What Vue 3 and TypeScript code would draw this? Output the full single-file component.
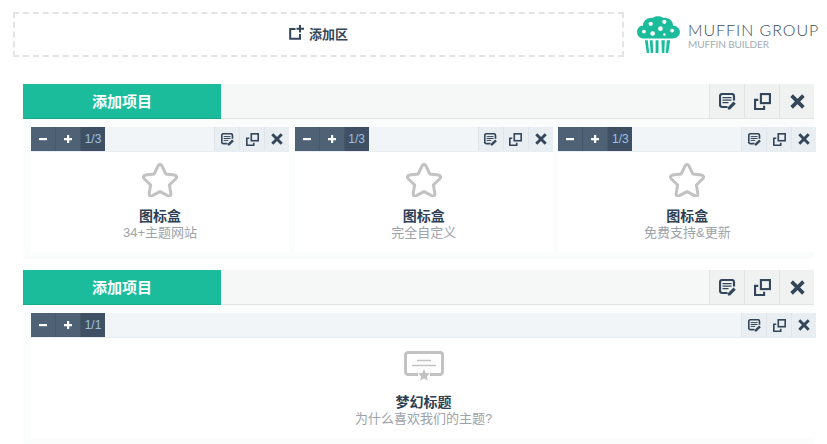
<script setup lang="ts">
interface Card { title: string; sub: string; size: string; icon: string; wide?: boolean }
const row1: Card[] = [
  { title: '图标盒', sub: '34+主题网站', size: '1/3', icon: 'star' },
  { title: '图标盒', sub: '完全自定义', size: '1/3', icon: 'star' },
  { title: '图标盒', sub: '免费支持&更新', size: '1/3', icon: 'star' },
]
const row2: Card[] = [
  { title: '梦幻标题', sub: '为什么喜欢我们的主题?', size: '1/1', icon: 'cert', wide: true },
]
const sections = [row1, row2]
const actions = ['ic-edit', 'ic-dup', 'ic-x']
</script>

<template>
  <div class="page">
    <svg class="defs" aria-hidden="true">
      <symbol id="ic-edit" viewBox="0 0 17 17">
        <path d="M8.500 14H3.200A2.200 2.200 0 0 1 1 11.800V3.200A2.200 2.200 0 0 1 3.200 1h9.600A2.200 2.200 0 0 1 15 3.200v4.300" fill="none" stroke="currentColor" stroke-width="2.200" stroke-linejoin="round" />
        <path d="M3.500 4.700h9M3.500 7.200h9M3.500 9.700h6" stroke="currentColor" stroke-width="1.300" />
        <path d="M8.800 14.200l5.700-5.700 2.300 2.300-5.700 5.700H8.800z" fill="currentColor" />
      </symbol>
      <symbol id="ic-dup" viewBox="0 0 16 16">
        <rect x="6.500" y="1" width="8.500" height="8.500" fill="none" stroke="currentColor" stroke-width="2" />
        <path d="M4 6.500H1V15h8.500v-3" fill="none" stroke="currentColor" stroke-width="2" />
      </symbol>
      <symbol id="ic-x" viewBox="0 0 14 14">
        <path d="M1.500 1.500l11 11M12.500 1.500l-11 11" fill="none" stroke="currentColor" stroke-width="3.400" />
      </symbol>
    </svg>

    <div class="top">
      <div class="add-zone">
        <svg class="add-icon" viewBox="0 0 15 15">
          <path d="M6.500 4H1.200v9.800H11V9" fill="none" stroke="#34465a" stroke-width="2" />
          <path d="M11 0v7.500M7.500 3.700H15" fill="none" stroke="#34465a" stroke-width="2" />
        </svg>
        <span>添加区</span>
      </div>
      <div class="brand">
        <svg class="muffin" viewBox="0 0 44 38">
          <path d="M9 23c-5 1-9-2-9-6.500S3 10 6 10c0-5 5-9 10-8 2-2 8-2.500 11 0 5-1 10 3 10 8 4 0 7 3 7 6.500s-4 7.500-9 6.500z" fill="#1abc9c" />
          <g fill="#fff">
            <circle cx="14" cy="8" r="2.200" /><circle cx="28" cy="6" r="2.200" /><circle cx="24" cy="13" r="2.400" />
            <circle cx="7" cy="16" r="2" /><circle cx="16" cy="18" r="2.400" /><circle cx="36" cy="15" r="2" /><circle cx="28" cy="19" r="1.300" />
          </g>
          <path d="M8 25h3l1.500 13H10zM13 25h3l.5 13H14zM19 25h3v13h-3zM25 25h3.500L28 38h-2.500zM30.500 25H34l-2 13h-2.500z" fill="#1abc9c" />
        </svg>
        <div class="brand-text">
          <div class="brand-name">MUFFIN GROUP</div>
          <div class="brand-sub">MUFFIN BUILDER</div>
        </div>
      </div>
    </div>

    <section v-for="(cards, s) in sections" :key="s" class="section">
      <header class="sec-head">
        <div class="sec-add">添加项目</div>
        <div class="sec-fill"></div>
        <button v-for="a in actions" :key="a" class="sec-btn">
          <svg :class="a"><use :href="'#' + a" /></svg>
        </button>
      </header>
      <div class="sec-body">
        <div class="cards">
          <div v-for="(c, i) in cards" :key="i" class="slot" :class="{ wide: c.wide }">
            <article class="card">
              <div class="card-head">
                <span class="step">
                  <svg viewBox="0 0 8 8"><rect y="3" width="8" height="2.200" fill="#fff" /></svg>
                </span>
                <span class="step">
                  <svg viewBox="0 0 8 8"><path d="M0 3h3V0h2.200v3H8v2.200H5.200V8H3V5.200H0z" fill="#fff" /></svg>
                </span>
                <span class="size">{{ c.size }}</span>
                <span class="card-fill"></span>
                <button v-for="a in actions" :key="a" class="card-btn">
                  <svg :class="a"><use :href="'#' + a" /></svg>
                </button>
              </div>
              <div class="card-body">
                <svg v-if="c.icon === 'star'" class="star-icon" viewBox="0 0 36 35">
                  <path d="M18 2.500c.9 0 1.500.6 2 1.600l3.800 7.800 8.500 1.200c1.200.2 2 .7 2.200 1.500.2.900-.2 1.600-1 2.400l-6.100 6 1.400 8.500c.2 1.100 0 1.900-.7 2.400-.7.500-1.500.3-2.500-.2L18 29.700l-7.600 4c-1 .5-1.800.7-2.500.2-.7-.5-.9-1.300-.7-2.400l1.400-8.500-6.100-6c-.8-.8-1.200-1.500-1-2.400.2-.8 1-1.300 2.200-1.500l8.500-1.200L16 4.100c.5-1 1.100-1.600 2-1.600z" fill="none" stroke="#c2c2c2" stroke-width="3" stroke-linejoin="round" />
                </svg>
                <svg v-else class="cert-icon" viewBox="0 0 40 30">
                  <path d="M14 23.500H4a2.500 2.500 0 0 1-2.500-2.500V4A2.500 2.500 0 0 1 4 1.500h32A2.500 2.500 0 0 1 38.500 4v17a2.500 2.500 0 0 1-2.500 2.500H26" fill="none" stroke="#c2c2c2" stroke-width="3" />
                  <path d="M13 9.500h14M8 14.500h24" stroke="#c2c2c2" stroke-width="1.500" />
                  <path d="M20 18l1.800 3.900 4.200.5-3.100 2.900.8 4.200-3.700-2.100-3.700 2.100.8-4.200-3.100-2.900 4.200-.5z" fill="#c2c2c2" />
                </svg>
                <div class="title">{{ c.title }}</div>
                <div class="sub">{{ c.sub }}</div>
              </div>
            </article>
          </div>
        </div>
      </div>
    </section>
  </div>
</template>

<style scoped>
.page {
  width: 827px;
  height: 444px;
  overflow: hidden;
  box-sizing: border-box;
  padding-top: 12px;
  background: #fff;
  font-family: "Liberation Sans", "Noto Sans CJK SC", sans-serif;
}
.defs { display: block; width: 0; height: 0; }
.top {
  display: flex;
  height: 45px;
  margin: 0 0 27px 13px;
}
.add-zone {
  width: 611px;
  flex: none;
  box-sizing: border-box;
  border: 2px dashed #e4e4e4;
  padding-bottom: 2px;
  display: flex;
  align-items: center;
  justify-content: center;
  gap: 5px;
  font-size: 13px;
  font-weight: 700;
  color: #34465a;
}
.add-icon { width: 15px; height: 15px; margin-top: -3px; }
.brand {
  display: flex;
  align-items: flex-start;
  margin-left: 13px;
  padding-top: 4px;
}
.muffin { width: 43px; height: 37px; flex: none; }
.brand-text { margin-left: 8px; padding-top: 5px; color: #3a4b5c; }
.brand-name {
  font-family: Lato, sans-serif;
  font-weight: 300;
  font-size: 16px;
  line-height: 17px;
  letter-spacing: .95px;
  white-space: nowrap;
}
.brand-sub {
  font-family: Lato, sans-serif;
  font-weight: 400;
  font-size: 10px;
  line-height: 12px;
  letter-spacing: -.1px;
  color: #a3acb5;
  white-space: nowrap;
}
.section { margin: 0 13px 11px 23px; }
.sec-head {
  display: flex;
  height: 35px;
  box-sizing: border-box;
  background: #f6f8f8;
  border-bottom: 1px solid #e2e4e4;
}
.sec-add {
  width: 198px;
  height: 35px;
  flex: none;
  box-sizing: border-box;
  background: #1abc9c;
  border-bottom: 1px solid #17ab8e;
  color: #fff;
  font-size: 15px;
  font-weight: 700;
  line-height: 33px;
  padding-top: 1px;
  text-align: center;
}
.sec-fill { flex: 1; }
.sec-btn {
  width: 35px;
  flex: none;
  padding: 0;
  border: 0;
  border-left: 1px solid #e2e4e4;
  background: #f0f2f2;
  color: #34465a;
  display: flex;
  align-items: center;
  justify-content: center;
}
.sec-btn svg { width: 17px; height: 17px; display: block; }
.sec-btn svg.ic-x { width: 15px; height: 15px; }
.sec-body {
  background: #fbfcfc;
  padding: 8px 0 7px 8px;
}
.cards { display: flex; width: 791px; }
.slot { width: 263.670px; flex: none; box-sizing: border-box; padding-right: 5.670px; }
.slot.wide { width: 785px; padding-right: 0; }
.card { background: #fff; }
.card-head {
  display: flex;
  height: 25px;
  box-sizing: border-box;
  background: #f1f5f8;
  border-bottom: 1px solid #e8edf1;
}
.step {
  width: 25px;
  height: 24px;
  flex: none;
  box-sizing: border-box;
  background: #4f6175;
  border-right: 1px solid #465769;
  display: flex;
  align-items: center;
  justify-content: center;
}
.step svg { width: 8px; height: 8px; display: block; }
.size {
  width: 24px;
  height: 24px;
  flex: none;
  background: #3f5064;
  color: #9cc1e2;
  font-size: 12px;
  line-height: 24px;
  text-align: center;
}
.card-fill { flex: 1; }
.card-btn {
  width: 25px;
  flex: none;
  padding: 0;
  border: 0;
  border-left: 1px solid #dfe5ea;
  background: #e9eef2;
  color: #34465a;
  display: flex;
  align-items: center;
  justify-content: center;
}
.card-btn svg { width: 13px; height: 13px; display: block; }
.card-btn svg.ic-x { width: 12px; height: 12px; }
.card-body {
  height: 100px;
  box-sizing: border-box;
  text-align: center;
  padding-top: 10px;
}
.star-icon { width: 36px; height: 35px; display: block; margin: 0 auto 11px; }
.cert-icon { width: 40px; height: 30px; display: block; margin: 3px auto 13px; }
.title {
  font-size: 14px;
  font-weight: 700;
  line-height: 16px;
  color: #2e3f55;
}
.sub {
  font-size: 13px;
  line-height: 17px;
  color: #9da3aa;
}
</style>
